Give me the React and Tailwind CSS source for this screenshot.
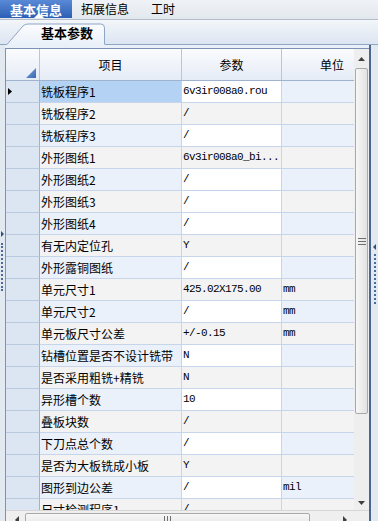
import React from "react";

const rows = [
  ["铣板程序1", "6v3ir008a0.rou", ""],
  ["铣板程序2", "/", ""],
  ["铣板程序3", "/", ""],
  ["外形图纸1", "6v3ir008a0_bi...", ""],
  ["外形图纸2", "/", ""],
  ["外形图纸3", "/", ""],
  ["外形图纸4", "/", ""],
  ["有无内定位孔", "Y", ""],
  ["外形露铜图纸", "/", ""],
  ["单元尺寸1", "425.02X175.00", "mm"],
  ["单元尺寸2", "/", "mm"],
  ["单元板尺寸公差", "+/-0.15", "mm"],
  ["钻槽位置是否不设计铣带", "N", ""],
  ["是否采用粗铣+精铣", "N", ""],
  ["异形槽个数", "10", ""],
  ["叠板块数", "/", ""],
  ["下刀点总个数", "/", ""],
  ["是否为大板铣成小板", "Y", ""],
  ["图形到边公差", "/", "mil"],
  ["尺寸检测程序1", "/", ""],
];

// 参数列里白底的行（可编辑）
const whiteParam = [1, 3, 5, 6, 7, 9, 11, 13, 15, 17, 19];

const Row = ({ r, i }) => {
  const alt = i % 2 === 0 ? "bg-[#eaf1fb]" : "bg-[#f3f3f3]";
  const sel = i === 0;
  const paramBg = whiteParam.includes(i + 1) ? "bg-white" : alt;
  return (
    <div className="flex h-[22px] flex-none">
      <div className="flex w-[34px] flex-none items-center border-r border-b border-r-[#9db2cf] border-b-[#b9c9de] bg-[#dce6f3] pl-[2px]">
        {sel && (
          <svg width="4" height="7">
            <polygon points="0,0 4,3.5 0,7" fill="#000" />
          </svg>
        )}
      </div>
      <div
        className={`flex w-[142px] flex-none items-center overflow-hidden whitespace-nowrap border-r border-b border-[#c6d5ea] pl-[1px] text-[12px] leading-[14px] ${
          sel ? "bg-[#b3d2f4]" : alt
        }`}
      >
        {r[0]}
      </div>
      <div
        className={`flex w-[100px] flex-none items-center overflow-hidden whitespace-nowrap border-r border-b border-[#c6d5ea] pl-[1px] font-['Liberation_Mono',monospace] text-[11px] tracking-[-0.6px] ${paramBg}`}
      >
        {r[1]}
      </div>
      <div
        className={`flex flex-1 items-center border-b border-[#c6d5ea] pl-[1px] font-['Liberation_Mono',monospace] text-[11px] tracking-[-0.6px] ${alt}`}
      >
        {r[2]}
      </div>
    </div>
  );
};

export default function App() {
  return (
    <div className="flex h-[521px] w-[378px] select-none flex-col overflow-hidden bg-[#e7ecf2] font-['Noto_Sans_CJK_SC',sans-serif] text-black">
      {/* 顶部页签 */}
      <div className="flex h-[20px] flex-none border-b border-[#b3bdca] bg-linear-to-b from-[#eff2f6] to-[#e3e8ee]">
        <div className="relative flex h-[18px] w-[72px] items-center justify-center bg-linear-to-b from-[#5a8ad6] to-[#2c5fb5] text-[13px] font-bold leading-none text-white">
          基本信息
          <span className="absolute bottom-0 left-[34px] h-0 w-0 border-x-[5px] border-b-[5px] border-x-transparent border-b-white" />
        </div>
        <div className="ml-[9px] flex h-[18px] items-center text-[12px] leading-none">拓展信息</div>
        <div className="ml-[22px] flex h-[18px] items-center text-[12px] leading-none">工时</div>
      </div>

      {/* 子页签 */}
      <div className="relative h-[25px] flex-none border-b border-[#8ea5c5] bg-linear-to-b from-[#f3f6fa] to-[#dce5f1]">
        <svg className="absolute left-0 top-0" width="110" height="26">
          <defs>
            <linearGradient id="tabg" x1="0" y1="0" x2="0" y2="1">
              <stop offset="0" stopColor="#fbfcfe" />
              <stop offset="1" stopColor="#eaf0f8" />
            </linearGradient>
          </defs>
          <path d="M7 26 L7 24.5 L23 6 Q25 4 28 4 L101 4 Q105 4 105 8 L105 26 Z" fill="url(#tabg)" />
          <path
            d="M0 24.5 L7 24.5 L23 6 Q25 4 28 4 L101 4 Q104.5 4 104.5 8 L104.5 24.5"
            fill="none"
            stroke="#8ea5c5"
          />
        </svg>
        <div className="absolute left-[41px] top-[5px] text-[13px] font-bold leading-[16px]">基本参数</div>
      </div>

      {/* 主体 */}
      <div className="flex min-h-0 flex-1">
        <div className="relative w-[5px] flex-none bg-[#e3e9f0]">
          <svg className="absolute left-[1px] top-[186px]" width="3" height="6">
            <polygon points="0,0 3,3 0,6" fill="#2f4f7f" />
          </svg>
          <div className="absolute left-[1px] top-[198px] h-[48px] border-l-2 border-dotted border-[#4a6a9a]" />
        </div>

        <div className="flex w-[364px] flex-none flex-col bg-[#eaf0f8] pt-[3px]">
          <div className="flex min-h-0 flex-1 flex-col border-t border-l border-[#7b92b4] bg-white">
            <div className="flex min-h-0 flex-1">
              <div className="flex w-[348px] flex-none flex-col overflow-hidden">
                {/* 表头 */}
                <div className="flex h-[32px] flex-none border-b border-[#9fb3cf] bg-linear-to-b from-[#fafbfd] to-[#e5ecf6] text-[12px]">
                  <div className="relative w-[34px] flex-none border-r border-[#b5c6dd]">
                    <svg className="absolute right-[3px] bottom-[2px]" width="10" height="10">
                      <defs>
                        <linearGradient id="cor" x1="0" y1="0" x2="1" y2="1">
                          <stop offset="0" stopColor="#7ba3dc" />
                          <stop offset="1" stopColor="#3a68b5" />
                        </linearGradient>
                      </defs>
                      <polygon points="10,0 10,10 0,10" fill="url(#cor)" />
                    </svg>
                  </div>
                  <div className="flex w-[142px] flex-none items-center justify-center border-r border-[#b5c6dd]">项目</div>
                  <div className="flex w-[100px] flex-none items-center justify-center border-r border-[#b5c6dd]">参数</div>
                  <div className="flex flex-1 items-center pl-[38px]">单位</div>
                </div>
                <div className="min-h-0 flex-1 overflow-hidden">
                  {rows.map((r, i) => (
                    <Row key={i} r={r} i={i} />
                  ))}
                </div>
              </div>

              {/* 竖滚动条 */}
              <div className="flex w-[15px] flex-none flex-col bg-[#eeeeee]">
                <div className="flex h-[17px] flex-none items-center justify-center pt-[3px]">
                  <svg width="7" height="4">
                    <polygon points="0,4 3.5,0 7,4" fill="#404040" />
                  </svg>
                </div>
                <div className="mx-[1px] mt-[2px] flex h-[346px] flex-none items-center justify-center rounded-[2px] border border-[#a9a9a9] bg-linear-to-r from-[#f7f7f7] to-[#e2e2e2]">
                  <svg width="8" height="7">
                    <path d="M0 0.5 H8 M0 3.5 H8 M0 6.5 H8" stroke="#6f6f6f" />
                  </svg>
                </div>
                <div className="flex-1" />
                <div className="flex h-[15px] flex-none items-center justify-center">
                  <svg width="7" height="4">
                    <polygon points="0,0 3.5,4 7,0" fill="#404040" />
                  </svg>
                </div>
              </div>
            </div>

            {/* 横滚动条 */}
            <div className="flex h-[11px] flex-none overflow-hidden border-t border-[#d6d6d6] bg-[#efefef]">
              <div className="flex w-[348px] flex-none items-start">
                <svg className="ml-[9px] mt-[5px] flex-none" width="4" height="8">
                  <polygon points="4,0 0,4 4,8" fill="#404040" />
                </svg>
                <div className="ml-[6px] mt-[2px] flex h-[17px] w-[285px] flex-none justify-center rounded-[2px] border border-[#a9a9a9] bg-linear-to-b from-[#f7f7f7] to-[#e2e2e2] pt-[2px]">
                  <svg width="7" height="8">
                    <path d="M0.5 0 V8 M3.5 0 V8 M6.5 0 V8" stroke="#6f6f6f" />
                  </svg>
                </div>
                <svg className="ml-[33px] mt-[5px] flex-none" width="4" height="8">
                  <polygon points="0,0 4,4 0,8" fill="#404040" />
                </svg>
              </div>
              <div className="w-[15px] flex-none" />
            </div>
          </div>
        </div>

        <div className="w-[2px] flex-none bg-[#4a6792]" />
        <div className="relative w-[7px] flex-none bg-[#e3e9f0]">
          <svg className="absolute left-[2px] top-[199px]" width="3" height="6">
            <polygon points="3,0 0,3 3,6" fill="#2f4f7f" />
          </svg>
          <div className="absolute left-[3px] top-[209px] h-[50px] border-l-2 border-dotted border-[#4a6a9a]" />
        </div>
      </div>
    </div>
  );
}
